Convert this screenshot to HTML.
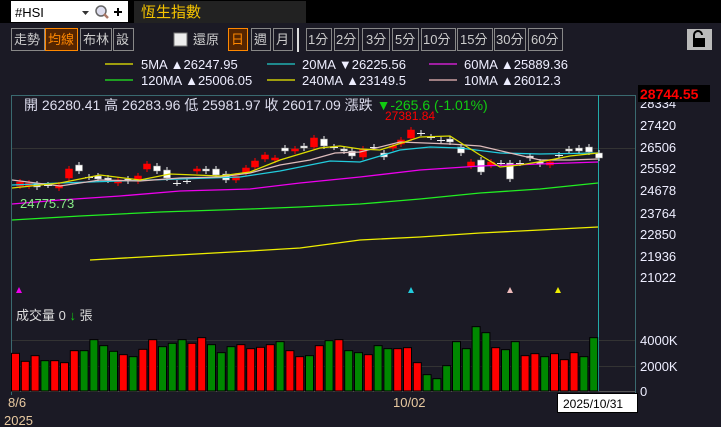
<!DOCTYPE html><html><head><meta charset="utf-8"><style>
body{margin:0;width:721px;height:427px;overflow:hidden;background:#1b1a25;font-family:"Liberation Sans","Noto Sans CJK TC",sans-serif}
svg{position:absolute;left:0;top:0}
</style></head><body>
<svg id="s" width="721" height="427" xmlns="http://www.w3.org/2000/svg" font-family="Liberation Sans, Noto Sans CJK TC, sans-serif">
<rect width="721" height="427" fill="#1b1a25"/>
<rect width="721" height="23" fill="#000"/>
<rect x="11" y="1" width="117" height="21" fill="#fff"/>
<text x="15" y="17" font-size="13" fill="#000">#HSI</text>
<path d="M82 11h7l-3.5 4z" fill="#333"/>
<circle cx="101" cy="11" r="5" fill="#dde" stroke="#666" stroke-width="1.5"/><path d="M104 14l4 4" stroke="#a76" stroke-width="2.5"/>
<path d="M114 12h8M118 8v8" stroke="#000" stroke-width="2"/>
<rect x="134" y="1" width="172" height="22" fill="#222"/>
<text x="141" y="17" font-size="15" fill="#f5c400">恆生指數</text>
<g font-size="13" fill="#ccc" stroke="#888">
<rect x="11.5" y="28.5" width="33" height="22" fill="#1b1a25"/><rect x="45.5" y="28.5" width="32" height="22" fill="#552500" stroke="#f80"/><rect x="80.5" y="28.5" width="31" height="22" fill="#1b1a25"/><rect x="113.5" y="28.5" width="20" height="22" fill="#1b1a25"/>
<rect x="174" y="33" width="13" height="13" fill="#eee" stroke="#777"/>
<rect x="228.5" y="28.5" width="19" height="22" fill="#552500" stroke="#f80"/><rect x="251.5" y="28.5" width="19" height="22" fill="#1b1a25"/><rect x="273.5" y="28.5" width="19" height="22" fill="#1b1a25"/>
<rect x="306.5" y="28.5" width="25" height="22" fill="#1b1a25"/><rect x="334.5" y="28.5" width="24" height="22" fill="#1b1a25"/><rect x="362.5" y="28.5" width="27" height="22" fill="#1b1a25"/><rect x="392.5" y="28.5" width="26" height="22" fill="#1b1a25"/><rect x="421.5" y="28.5" width="34" height="22" fill="#1b1a25"/><rect x="457.5" y="28.5" width="35" height="22" fill="#1b1a25"/><rect x="494.5" y="28.5" width="31" height="22" fill="#1b1a25"/><rect x="528.5" y="28.5" width="34" height="22" fill="#1b1a25"/>
</g>
<rect x="297" y="28" width="2" height="24" fill="#ddd"/>
<g font-size="13" fill="#ccc">
<text x="14" y="44">走勢</text><text x="48" y="44" fill="#f80">均線</text><text x="83" y="44">布林</text><text x="116" y="44">設</text>
<text x="193" y="44">還原</text><text x="231" y="44" fill="#f80">日</text><text x="254" y="44">週</text><text x="276" y="44">月</text>
<text x="308" y="44">1分</text><text x="336" y="44">2分</text><text x="366" y="44">3分</text><text x="395" y="44">5分</text><text x="423" y="44">10分</text><text x="460" y="44">15分</text><text x="496" y="44">30分</text><text x="531" y="44">60分</text>
</g>
<rect x="687" y="29" width="25" height="21" fill="#bbb"/><rect x="693" y="38" width="12" height="9" fill="#000"/><path d="M694 38v-3a4 4 0 0 1 8 0" stroke="#000" stroke-width="2" fill="none"/>
<g stroke-width="1.2">
<path d="M105 64h28" stroke="#ee0"/><path d="M267 64h28" stroke="#2cc"/><path d="M429 64h28" stroke="#e2e"/>
<path d="M105 80h28" stroke="#2e2"/><path d="M267 80h28" stroke="#ee0"/><path d="M429 80h28" stroke="#ebb"/>
</g>
<g font-size="13" fill="#eef">
<text x="141" y="69">5MA ▲26247.95</text><text x="302" y="69">20MA ▼26225.56</text><text x="464" y="69">60MA ▲25889.36</text>
<text x="141" y="85">120MA ▲25006.05</text><text x="302" y="85">240MA ▲23149.5</text><text x="464" y="85">10MA ▲26012.3</text>
</g>
<path d="M11 95.5H635M11.5 95V395M635.5 95V395" stroke="#3a6a70" fill="none"/>
<path d="M12 148.5H635M12 340.5H635M12 366.5H635" stroke="#333" />
<path d="M598.5 95V392" stroke="#2aa"/>
<path d="M11 391.5H635" stroke="#555"/>
<g id="cand"></g><g id="vol"></g>
<g fill="none" stroke-width="1.3">
<polyline stroke="#e0e" points="12,204 60,200 120,196 180,191 250,189 300,183 360,177 420,170 480,166 540,164 598,162"/>
<polyline stroke="#2e2" points="12,220 80,216 160,212 250,209 300,207 360,204 420,199 480,193 540,189 598,183"/>
<polyline stroke="#ee0" points="90,260 160,256 250,251 300,248 360,240 420,237 480,233 540,230 598,227"/>
<polyline stroke="#2cd" points="12,185 60,183 120,181 180,179 240,177 280,171 330,161 360,162 400,150 430,147 460,148 500,153 540,154 598,153"/>
<polyline stroke="#dbb" points="12,180 60,186 100,180 140,181 180,178 220,177 250,173 280,165 310,160 335,153 360,152 400,142 450,144 480,146 510,153 540,160 570,160 598,159"/>
<polyline stroke="#dd0" points="12,188 60,183 100,175 140,180 170,174 220,176 250,172 280,160 320,148 340,146 360,149 380,150 420,137 450,136 480,155 500,167 520,165 550,160 570,156 598,153"/>
</g>
<text x="20" y="208" font-size="13" fill="#8e8">24775.73</text>
<text x="385" y="120" font-size="12" fill="#f00">27381.84</text>
<text x="24" y="110" font-size="14" fill="#dde">開 26280.41 高 26283.96 低 25981.97 收 26017.09 漲跌 <tspan fill="#1c1">▼-265.6 (-1.01%)</tspan></text>
<g font-size="13" fill="#eef">
<text x="640" y="108">28334</text><text x="640" y="130">27420</text><text x="640" y="152">26506</text><text x="640" y="173">25592</text><text x="640" y="195">24678</text><text x="640" y="218">23764</text><text x="640" y="239">22850</text><text x="640" y="261">21936</text><text x="640" y="282">21022</text>
<text x="640" y="345">4000K</text><text x="640" y="371">2000K</text><text x="640" y="396">0</text>
</g>
<rect x="638" y="85" width="72" height="17" fill="#000"/>
<text x="640" y="99" font-size="14" font-weight="bold" fill="#f00">28744.55</text>
<path d="M16 293l3-6 3 6z" fill="#e0e"/><path d="M408 293l3-6 3 6z" fill="#2cd"/><path d="M507 293l3-6 3 6z" fill="#ebb"/><path d="M555 293l3-6 3 6z" fill="#ee0"/>
<text x="16" y="320" font-size="13" fill="#ddd">成交量 0 <tspan fill="#1c1">↓</tspan> 張</text>
<g font-size="13" fill="#e8c9a0"><text x="8" y="407">8/6</text><text x="4" y="425">2025</text><text x="393" y="407">10/02</text></g>
<rect x="557.5" y="393.5" width="80" height="19" fill="#fff" stroke="#000"/>
<text x="563" y="408" font-size="12" fill="#000">2025/10/31</text>
</svg>
<script>
var NS="http://www.w3.org/2000/svg";
function el(p,t,a){var e=document.createElementNS(NS,t);for(var k in a)e.setAttribute(k,a[k]);p.appendChild(e);return e;}
var v=document.getElementById("vol");
var d="R220 R244 R227 G242 R242 R248 R212 G212 G179 G197 G214 R224 G230 R208 R179 G200 G190 G179 R190 R173 G194 G218 G200 R194 R206 R202 R194 G185 R212 R230 G227 R197 G182 R179 G212 G218 R224 G197 G206 R206 R203 R248 G284 G296 G257 G185 G206 G140 G158 R203 G209 G185 R227 R221 G230 R221 R239 R218 G230 G173".split(" ");
d.forEach(function(s,i){var y=280+(+s.slice(1))/3;el(v,"rect",{x:11.5+i*9.8,y:y,width:8,height:391-y,fill:s[0]=="R"?"#f00":"#080",stroke:"#000","stroke-width":1});});
var c=document.getElementById("cand");
var cs=[[20,"r",182,186],[29,"r",183,186],[37,"w",184,187],[48,"x",185,185],[59,"r",185,188],[69,"r",169,178],[79,"w",165,171],[89,"x",177,177],[98,"w",176,179],[108,"w",178,180],[118,"r",180,183],[128,"w",179,181],[138,"r",176,181],[147,"r",164,169],[157,"w",166,171],[167,"w",170,178],[177,"x",183,183],[187,"x",181,181],[197,"r",169,171],[206,"w",169,171],[216,"w",169,175],[226,"w",174,180],[236,"r",176,180],[246,"r",168,173],[255,"r",161,167],[265,"r",155,159],[275,"r",158,160],[285,"w",148,151],[295,"r",149,151],[304,"w",146,148],[314,"r",138,147],[324,"w",139,146],[334,"x",147,147],[344,"w",149,151],[352,"w",151,156],[363,"r",149,157],[374,"x",147,147],[384,"w",153,157],[393,"r",146,148],[401,"r",140,144],[411,"r",130,138],[421,"x",133,133],[431,"x",137,137],[441,"x",140,140],[450,"w",139,142],[461,"w",147,153],[471,"r",162,166],[481,"w",160,172],[491,"r",162,165],[501,"x",163,163],[510,"w",163,179],[520,"x",163,163],[530,"w",156,158],[540,"w",162,164],[550,"r",162,165],[559,"x",155,155],[569,"w",149,151],[579,"w",148,151],[589,"w",147,152],[599,"w",153,158]];
cs.forEach(function(k){var x=k[0],col=k[1]=="r"?"#f00":"#eee";el(c,"line",{x1:x,x2:x,y1:k[2]-3,y2:k[3]+3,stroke:col});
if(k[1]=="x")el(c,"line",{x1:x-4,x2:x+4,y1:k[2]+.5,y2:k[2]+.5,stroke:"#eee"});
else el(c,"rect",{x:x-3.5,y:k[2],width:7,height:Math.max(2,k[3]-k[2]),fill:k[1]=="r"?"#f00":"#fff",stroke:k[1]=="r"?"#f00":"#888","stroke-width":.5});});
</script>
</body></html>
